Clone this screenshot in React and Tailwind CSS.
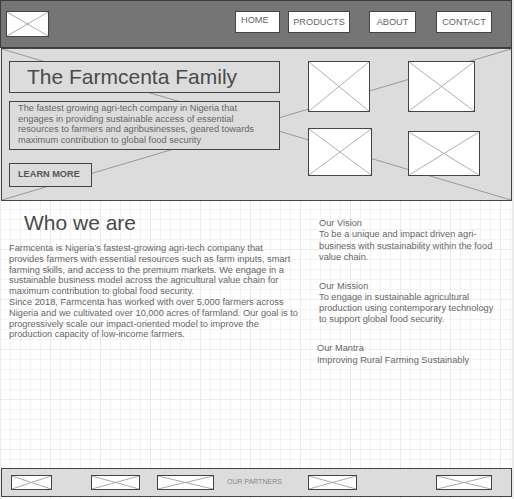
import React from 'react';

function Placeholder({ className = '', line = '#b0b0b0' }) {
  return (
    <div className={`relative bg-white border border-[#444] ${className}`}>
      <svg className="absolute inset-0 w-full h-full" preserveAspectRatio="none" viewBox="0 0 100 100">
        <line x1="0" y1="0" x2="100" y2="100" stroke={line} strokeWidth="1" vectorEffect="non-scaling-stroke" />
        <line x1="100" y1="0" x2="0" y2="100" stroke={line} strokeWidth="1" vectorEffect="non-scaling-stroke" />
      </svg>
    </div>
  );
}

function NavButton({ label, className = '' }) {
  return (
    <div className={`h-[22px] bg-white border border-[#444] flex items-center justify-center text-[9.2px] text-[#666] ${className}`}>
      {label}
    </div>
  );
}

export default function App() {
  return (
    <div className="w-[514px] h-[499px] flex overflow-hidden font-['Liberation_Sans',Arial,sans-serif] bg-white bg-[linear-gradient(#ebebeb_1px,transparent_1px),linear-gradient(90deg,#ebebeb_1px,transparent_1px),linear-gradient(#f3f3f3_1px,transparent_1px),linear-gradient(90deg,#f3f3f3_1px,transparent_1px)] bg-size-[50px_50px,50px_50px,10px_10px,10px_10px] bg-position-[0_-1px]">
      <div className="w-[512px] flex flex-col">
        {/* header */}
        <header className="h-[48px] w-[512px] bg-[#757575] border border-[#3c3c3c] flex items-start">
          <Placeholder className="ml-[5px] mt-[10px] w-[43px] h-[26px]" line="#aaa" />
          <NavButton label="HOME" className="ml-[186px] mt-[10px] w-[45px] !justify-start !items-start pl-[5px] pt-[2px]" />
          <NavButton label="PRODUCTS" className="ml-[8px] mt-[10px] w-[62px] pt-[1px]" />
          <NavButton label="ABOUT" className="ml-[19px] mt-[10px] w-[47px] pt-[1px]" />
          <NavButton label="CONTACT" className="ml-[20px] mt-[10px] w-[56px] pt-[1px]" />
        </header>

        {/* hero */}
        <section className="relative ml-[1px] w-[511px] h-[153px] bg-[#dcdcdc] border border-[#444] flex">
          <svg className="absolute inset-0 w-full h-full" preserveAspectRatio="none" viewBox="0 0 100 100">
            <line x1="0" y1="0" x2="100" y2="100" stroke="#999" strokeWidth="1" vectorEffect="non-scaling-stroke" />
            <line x1="100" y1="0" x2="0" y2="100" stroke="#999" strokeWidth="1" vectorEffect="non-scaling-stroke" />
          </svg>

          <div className="relative ml-[7px] mt-[12px] w-[271px] flex flex-col">
            <div className="h-[32px] border border-[#444] bg-[#dcdcdc] pl-[17px] text-[21px] leading-[30px] text-[#4a4a4a]">
              The Farmcenta Family
            </div>
            <div className="mt-[8px] h-[49px] border border-[#444] bg-[#dcdcdc] pl-[8px] pr-[8px] pt-[1px] text-[9.25px] leading-[10.6px] text-[#666]">
              The fastest growing agri-tech company in Nigeria that engages in providing sustainable access of essential resources to farmers and agribusinesses, geared towards maximum contribution to global food security
            </div>
            <div className="mt-[13px] w-[83px] h-[24px] border border-[#444] bg-[#dcdcdc] pl-[8px] flex items-center text-[9.2px] font-bold text-[#555]">
              LEARN MORE
            </div>
          </div>

          <div className="relative ml-[28px] mt-[12px] flex flex-col">
            <div className="flex items-start">
              <Placeholder className="w-[62px] h-[51px]" />
              <Placeholder className="ml-[38px] w-[67px] h-[51px]" />
            </div>
            <div className="flex items-start mt-[16px]">
              <Placeholder className="w-[64px] h-[48px]" />
              <Placeholder className="ml-[36px] mt-[3px] w-[72px] h-[45px]" />
            </div>
          </div>
        </section>

        {/* who we are */}
        <section className="h-[267px] flex">
          <div className="pl-[9px] w-[298px] flex flex-col">
            <h1 className="mt-[10px] pl-[15px] text-[21px] leading-[24px] text-[#4a4a4a]">Who we are</h1>
            <p className="mt-[8px] text-[9.25px] leading-[10.8px] text-[#666]">
              Farmcenta is Nigeria&rsquo;s fastest-growing agri-tech company that provides farmers with essential resources such as farm inputs, smart farming skills, and access to the premium markets. We engage in a sustainable business model across the agricultural value chain for maximum contribution to global food security.
              <br />
              Since 2018, Farmcenta has worked with over 5,000 farmers across Nigeria and we cultivated over 10,000 acres of farmland. Our goal is to progressively scale our impact-oriented model to improve the production capacity of low-income farmers.
            </p>
          </div>
          <div className="ml-[21px] w-[180px] flex flex-col text-[9.25px] text-[#666]">
            <div className="mt-[17px] leading-[11.3px]">
              <p>Our Vision</p>
              <p>To be a unique and impact driven agri-business with sustainability within the food value chain.</p>
            </div>
            <div className="mt-[18px] leading-[10.8px]">
              <p>Our Mission</p>
              <p>To engage in sustainable agricultural production using contemporary technology to support global food security.</p>
            </div>
            <div className="mt-[19px] -ml-[2px] leading-[11.3px]">
              <p>Our Mantra</p>
              <p>Improving Rural Farming Sustainably</p>
            </div>
          </div>
        </section>

        {/* partners */}
        <footer className="ml-[1px] w-[511px] h-[29px] bg-[#dcdcdc] border border-[#444] flex items-center">
          <Placeholder className="ml-[9px] w-[41px] h-[15px]" line="#aaa" />
          <Placeholder className="ml-[39px] w-[49px] h-[15px]" line="#aaa" />
          <Placeholder className="ml-[17px] w-[57px] h-[15px]" line="#aaa" />
          <span className="ml-[13px] w-[66px] text-[7px] text-[#888]">OUR PARTNERS</span>
          <Placeholder className="ml-[15px] w-[49px] h-[15px]" line="#aaa" />
          <Placeholder className="ml-[79px] w-[56px] h-[15px]" line="#aaa" />
        </footer>
      </div>
      <div className="w-[2px] bg-[#ececec]" />
    </div>
  );
}
